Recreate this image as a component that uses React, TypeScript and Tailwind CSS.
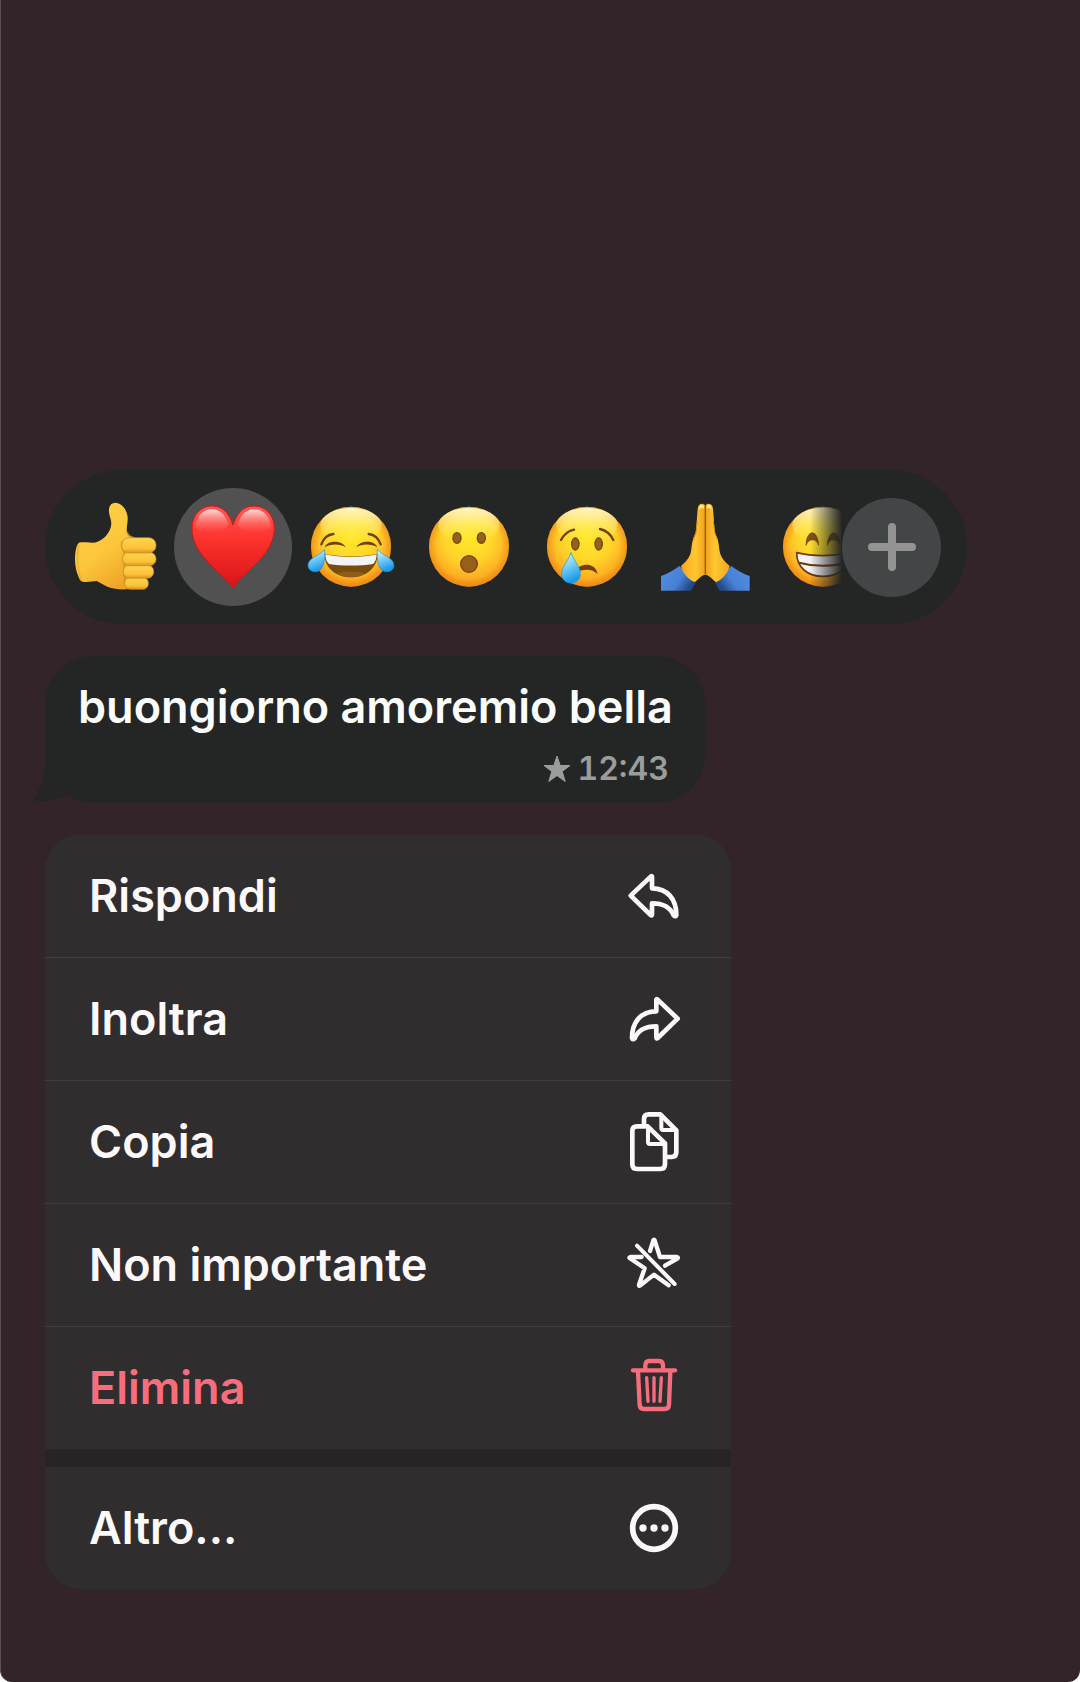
import type { ReactNode } from "react";

const Face = ({ children }: { children: ReactNode }) => (
  <svg viewBox="0 0 354 354" className="size-full" aria-hidden="true">
    <circle cx="177" cy="176" r="120" fill="url(#face)" />
    <circle cx="177" cy="176" r="120" fill="url(#faceEdge)" />
    <ellipse cx="177" cy="112" rx="92" ry="52" fill="url(#faceShine)" />
    {children}
  </svg>
);

const Tear = ({ d }: { d: string }) => (
  <path d={d} fill="url(#tear)" stroke="#1597e0" strokeWidth="2" />
);

// Gradients shared by every emoji
const EmojiDefs = () => (
  <svg className="absolute size-0" aria-hidden="true">
    <defs>
      <radialGradient id="face" cx="0.5" cy="0.36" r="0.66">
        <stop offset="0" stopColor="#ffe927" />
        <stop offset="0.45" stopColor="#ffd72b" />
        <stop offset="0.8" stopColor="#fdb022" />
        <stop offset="1" stopColor="#f28d19" />
      </radialGradient>
      <radialGradient id="faceEdge">
        <stop offset="0.8" stopColor="#e87e10" stopOpacity="0" />
        <stop offset="1" stopColor="#e87e10" stopOpacity="0.5" />
      </radialGradient>
      <linearGradient id="faceShine" x1="0" y1="0" x2="0" y2="1">
        <stop offset="0" stopColor="#fffbd8" stopOpacity="0.95" />
        <stop offset="1" stopColor="#ffee50" stopOpacity="0" />
      </linearGradient>
      <linearGradient id="tear" x1="0" y1="0" x2="0.3" y2="1">
        <stop offset="0" stopColor="#e4f8ff" />
        <stop offset="0.5" stopColor="#7ccef6" />
        <stop offset="1" stopColor="#1c9bea" />
      </linearGradient>
      <linearGradient id="heart" x1="0" y1="0" x2="0" y2="1">
        <stop offset="0" stopColor="#ff5a56" />
        <stop offset="0.4" stopColor="#fd322d" />
        <stop offset="1" stopColor="#d51417" />
      </linearGradient>
      <linearGradient id="heartShine" x1="0" y1="0" x2="0" y2="1">
        <stop offset="0" stopColor="#ffe3e0" stopOpacity="0.95" />
        <stop offset="1" stopColor="#ff5a50" stopOpacity="0" />
      </linearGradient>
      <linearGradient id="skin" x1="0" y1="0" x2="0.6" y2="1">
        <stop offset="0" stopColor="#ffd34c" />
        <stop offset="0.6" stopColor="#fcc63b" />
        <stop offset="1" stopColor="#eda326" />
      </linearGradient>
      <linearGradient id="finger" x1="0" y1="0" x2="0" y2="1">
        <stop offset="0" stopColor="#ffd550" />
        <stop offset="0.7" stopColor="#fac238" />
        <stop offset="1" stopColor="#dc951f" />
      </linearGradient>
      <linearGradient id="palm" x1="0" y1="0" x2="1" y2="0">
        <stop offset="0" stopColor="#f7a51f" />
        <stop offset="0.6" stopColor="#ffc831" />
        <stop offset="1" stopColor="#f0a01d" />
      </linearGradient>
      <linearGradient id="sleeve" x1="0" y1="0" x2="1" y2="0.5">
        <stop offset="0" stopColor="#5590e4" />
        <stop offset="0.65" stopColor="#4781d6" />
        <stop offset="1" stopColor="#234a8c" />
      </linearGradient>
    </defs>
  </svg>
);

const ThumbsUp = () => (
  <svg viewBox="0 0 354 354" className="size-full" aria-hidden="true">
    <path
      d="M159 62C161 50 168 44 178 44C198 45 213 66 215 88C216 105 210 120 213 132C216 142 224 146 236 150L272 210L262 290L214 304C190 305 172 303 156 297C143 292 134 284 122 279C112 279 102 282 92 282C80 282 74 280 70 272C62 256 57 236 57 214C57 194 60 176 66 167C70 161 80 163 92 163C104 163 114 166 125 161C134 157 145 151 152 141C160 130 166 120 166 106C166 92 157 80 159 62Z"
      fill="url(#skin)"
    />
    <path
      d="M213 132C216 142 224 147 234 149C210 150 194 158 197 174C198 186 204 190 206 196C200 206 200 222 206 232C202 242 201 262 208 270C204 280 206 292 213 302"
      fill="none"
      stroke="#c98a1c"
      strokeWidth="5"
      opacity="0.75"
    />
    <g fill="url(#finger)" stroke="#cf8d1d" strokeWidth="2">
      <rect x="206" y="268" width="71" height="36" rx="17" />
      <rect x="202" y="231" width="91" height="40" rx="19" />
      <rect x="200" y="193" width="100" height="40" rx="19" />
      <rect x="197" y="149" width="103" height="46" rx="22" />
    </g>
    <path d="M69 172C62 194 62 242 76 274" fill="none" stroke="#e5a32b" strokeWidth="5" opacity="0.6" />
  </svg>
);

const Heart = () => (
  <svg viewBox="0 0 354 354" className="size-full" aria-hidden="true">
    <path
      d="M177 301C164 280 132 253 102 222C72 191 54 158 54 120C54 81 80 54 114 54C146 54 166 76 177 111C188 76 208 54 240 54C274 54 301 81 301 120C301 158 282 191 252 222C222 253 190 280 177 301Z"
      fill="url(#heart)"
      stroke="#cf1719"
      strokeWidth="3"
    />
    <path d="M65 118C66 85 86 64 114 64C142 64 158 88 164 112C140 140 92 148 65 118Z" fill="url(#heartShine)" />
    <path d="M190 112C196 88 212 64 240 64C268 64 289 85 290 118C262 148 214 140 190 112Z" fill="url(#heartShine)" />
  </svg>
);

const Joy = () => (
  <Face>
    <g fill="none" stroke="#70410b" strokeLinecap="round">
      <path d="M88 169C94 152 107 140 124 138" strokeWidth="7" />
      <path d="M266 169C260 152 247 140 230 138" strokeWidth="7" />
    </g>
    <g fill="#70410b">
      <path d="M98 178C106 156 150 156 161 178C144 167 116 167 98 178Z" />
      <path d="M256 178C248 156 204 156 193 178C210 167 238 167 256 178Z" />
    </g>
    <path d="M98 197C145 208 209 208 256 197C258 240 220 268 177 268C134 268 96 240 98 197Z" fill="#794c0d" />
    <path d="M100 199C147 210 207 210 254 199C254 212 250 222 243 228C205 234 149 234 111 228C104 222 100 212 100 199Z" fill="#f4f3f5" />
    <path d="M134 257C158 248 196 248 220 257C196 271 158 271 134 257Z" fill="#98691e" opacity="0.6" />
    <Tear d="M98 184C99 210 98 251 70 251C54 251 44 238 50 224C57 208 82 202 98 184Z" />
    <Tear d="M256 184C255 210 256 251 284 251C300 251 310 238 304 224C297 208 272 202 256 184Z" />
  </Face>
);

const Surprised = () => (
  <Face>
    <g fill="#96601a" stroke="#74430a" strokeWidth="4">
      <ellipse cx="141" cy="150" rx="12" ry="16" />
      <ellipse cx="214" cy="150" rx="12" ry="16" />
      <circle cx="177" cy="228" r="25" />
    </g>
  </Face>
);

const Crying = () => (
  <Face>
    <g fill="none" stroke="#70410b" strokeWidth="7" strokeLinecap="round">
      <path d="M99 156C107 140 121 129 138 125" />
      <path d="M216 123C233 127 248 139 256 156" />
    </g>
    <g fill="#96601a" stroke="#74430a" strokeWidth="4">
      <ellipse cx="142" cy="168" rx="11" ry="18" />
      <ellipse cx="212" cy="168" rx="11" ry="18" />
    </g>
    <path d="M152 238C168 226 202 226 209 258C194 242 170 242 148 251Z" fill="#70410b" />
    <Tear d="M129 193C134 215 157 234 157 257C157 274 145 285 129 285C113 285 101 274 101 257C101 234 124 215 129 193Z" />
  </Face>
);

const PrayHand = () => (
  <>
    <path d="M45 264C64 258 84 246 100 234L149 282C144 292 140 300 134 308H45Z" fill="url(#sleeve)" />
    <path
      d="M155 62C156 52 161 47 169 47C175 47 178 51 178 58V260C166 262 158 272 147 282C130 278 110 256 105 234C120 221 132 208 135 190C137 178 137 168 140 158C141 148 148 140 150 130Z"
      fill="url(#palm)"
    />
    <path d="M160 57C162 49 171 48 174 56L173 63C168 57 164 59 161 67Z" fill="#ffe9a2" />
    <path d="M154 100L150 134L142 156" fill="none" stroke="#d88a17" strokeWidth="3" />
  </>
);

const Pray = () => (
  <svg viewBox="0 0 354 354" className="size-full" aria-hidden="true">
    <PrayHand />
    <g transform="translate(356 0) scale(-1 1)">
      <PrayHand />
    </g>
    <path d="M178 52V258" stroke="#9d560c" strokeWidth="4" />
  </svg>
);

const Grin = () => (
  <Face>
    <g fill="#83501a" stroke="#70410b" strokeWidth="2">
      <path d="M126 172C127 122 162 122 164 172C157 150 135 150 126 172Z" />
      <path d="M228 172C227 122 192 122 190 172C197 150 219 150 228 172Z" />
    </g>
    <path
      d="M98 194C146 206 208 206 256 194C256 240 222 265 177 265C132 265 98 240 98 194Z"
      fill="#f4f2f5"
      stroke="#6c3a0e"
      strokeWidth="5"
      strokeLinejoin="round"
    />
    <path d="M105 224C150 236 204 236 249 224" fill="none" stroke="#6c3a0e" strokeWidth="6" />
  </Face>
);

const ReplyIcon = () => (
  <path
    d="M23 92L84 34Q87 32 87 36V70C133 70 160 102 160 150Q158 157 152 151C140 123 118 115 87 115V148Q87 153 83 150Z"
    strokeWidth="14"
  />
);

const ForwardIcon = () => (
  <g transform="translate(187 0) scale(-1 1)">
    <ReplyIcon />
  </g>
);

const CopyIcon = () => (
  <g strokeWidth="14">
    <path d="M42 46H74L126 97V160Q126 174 112 174H42Q28 174 28 160V60Q28 46 42 46Z" />
    <path d="M75 49V93Q75 99 81 99H124" strokeWidth="12" />
    <path d="M63 42V24Q63 10 77 10H112L160 58V124Q160 138 146 138H130" />
    <path d="M115 13V52Q115 57 120 57H157" strokeWidth="12" />
  </g>
);

const UnstarIcon = () => (
  <g strokeWidth="13">
    <path d="M42 35L155 150" strokeWidth="12" />
    <path d="M81 51L91 19Q93 15 95 19L111 69H162Q167 70 163 74L126 95" />
    <path d="M56 69H22Q17 70 21 73L65 103L48 152Q47 158 52 154L93 122L137 154" />
  </g>
);

const TrashIcon = () => (
  <g strokeWidth="13">
    <path d="M30 40H156" />
    <path d="M67 37V25Q67 12 79 12H108Q120 12 120 25V37" />
    <path d="M45 43L50 144Q51 156 63 156H125Q137 156 138 144L142 43" />
    <path d="M71 62L75 133M93 62V133M115 62L111 133" strokeWidth="10" />
  </g>
);

const MoreIcon = () => (
  <>
    <circle cx="93" cy="93" r="64" strokeWidth="17" />
    <g fill="currentColor" stroke="none">
      <circle cx="60" cy="93" r="11" />
      <circle cx="93" cy="93" r="11" />
      <circle cx="126" cy="93" r="11" />
    </g>
  </>
);

const reactions = [
  { label: "Pollice in su", icon: <ThumbsUp /> },
  { label: "Cuore", icon: <Heart />, active: true },
  { label: "Risata", icon: <Joy /> },
  { label: "Sorpresa", icon: <Surprised /> },
  { label: "Tristezza", icon: <Crying /> },
  { label: "Grazie", icon: <Pray /> },
  { label: "Sorriso", icon: <Grin /> },
];

const actions = [
  { label: "Rispondi", icon: <ReplyIcon /> },
  { label: "Inoltra", icon: <ForwardIcon /> },
  { label: "Copia", icon: <CopyIcon /> },
  { label: "Non importante", icon: <UnstarIcon /> },
  { label: "Elimina", icon: <TrashIcon />, danger: true },
];

const MenuItem = ({ label, icon, danger }: { label: string; icon: ReactNode; danger?: boolean }) => (
  <button
    type="button"
    className={`flex h-[122px] w-full items-center justify-between bg-[#302d2e] pr-[46px] pl-11 text-left ${
      danger ? "text-[#f76d7e]" : "text-[#fdf9fb]"
    }`}
  >
    <span>{label}</span>
    <svg
      viewBox="0 0 186 186"
      className="size-[62px]"
      fill="none"
      stroke="currentColor"
      strokeLinecap="round"
      strokeLinejoin="round"
      aria-hidden="true"
    >
      {icon}
    </svg>
  </button>
);

const App = () => {
  return (
    <div className="bg-white">
      <main className="flex min-h-screen flex-col items-start rounded-b-xl border-l border-[#5a4e52] bg-[#322428] px-11 pt-[470px] pb-[92px] font-['Inter','Liberation_Sans',sans-serif] text-[45px] leading-[56px] font-semibold">
        <EmojiDefs />

        {/* Reactions */}
        <div className="flex h-[154px] w-full max-w-[922px] items-center rounded-full bg-[#242625] pr-[26px] pl-[11px]">
          <div className="flex min-w-0 flex-1 overflow-hidden [mask-image:linear-gradient(to_right,black_calc(100%-32px),transparent)]">
            {reactions.map(({ label, icon, active }) => (
              <button
                key={label}
                type="button"
                aria-label={label}
                className={`size-[118px] shrink-0 rounded-full ${active ? "bg-[#515151]" : ""}`}
              >
                {icon}
              </button>
            ))}
          </div>
          <button
            type="button"
            aria-label="Altre reazioni"
            className="flex size-[99px] shrink-0 items-center justify-center rounded-full bg-[#434647] text-[#939394]"
          >
            <svg viewBox="0 0 48 48" className="size-12" stroke="currentColor" strokeWidth="8" strokeLinecap="round" aria-hidden="true">
              <path d="M24 4V44M4 24H44" />
            </svg>
          </button>
        </div>

        {/* Message */}
        <div className="relative mt-8 rounded-[48px] bg-[#242625] pt-[23px] pr-8 pb-4 pl-[33px]">
          <svg viewBox="0 0 50 40" className="absolute bottom-0 -left-3 h-10 w-[50px] text-[#242625]" fill="currentColor" aria-hidden="true">
            <path d="M12 0C12 16 6 28 1 35C0 38 2 39 5 38C16 38 26 36 35 32L50 20V0Z" />
          </svg>
          <p className="relative text-[#fbfcfc]">buongiorno amoremio bella</p>
          <div className="mt-4 flex items-center justify-end gap-1.5 pr-1 text-[32px] leading-9 text-[#9b9c9c]">
            <svg viewBox="0 0 28 28" className="size-7" fill="currentColor" stroke="currentColor" strokeLinejoin="round" aria-label="Importante">
              <path d="M14 1L17.2 10.5H27L19.2 16.4L22.2 26.5L14 20.6L5.8 26.5L8.8 16.4L1 10.5H10.8Z" />
            </svg>
            <time className="tabular-nums">12:43</time>
          </div>
        </div>

        {/* Context menu */}
        <div className="mt-8 w-full max-w-[686px] overflow-hidden rounded-[36px] bg-[#272425]">
          <div className="flex flex-col gap-px bg-[#413e3f]">
            {actions.map((action) => (
              <MenuItem key={action.label} {...action} />
            ))}
          </div>
          <div className="mt-[18px]">
            <MenuItem label="Altro..." icon={<MoreIcon />} />
          </div>
        </div>
      </main>
    </div>
  );
};

export default App;
